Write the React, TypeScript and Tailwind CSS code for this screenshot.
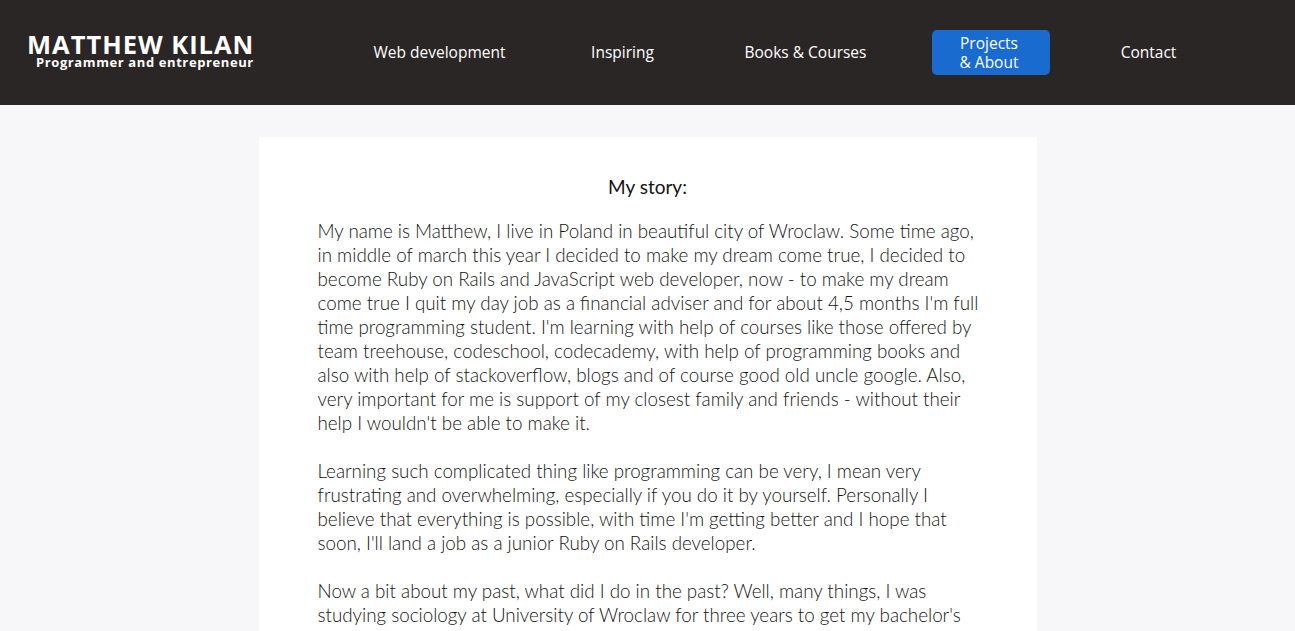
const navItems = [
  { label: "Web development", width: "w-[183px]" },
  { label: "Inspiring", width: "w-[183px]" },
  { label: "Books & Courses", width: "w-[183px]" },
];

const paragraphs = [
  "My name is Matthew, I live in Poland in beautiful city of Wroclaw. Some time ago, in middle of march this year I decided to make my dream come true, I decided to become Ruby on Rails and JavaScript web developer, now - to make my dream come true I quit my day job as a financial adviser and for about 4,5 months I'm full time programming student. I'm learning with help of courses like those offered by team treehouse, codeschool, codecademy, with help of programming books and also with help of stackoverflow, blogs and of course good old uncle google. Also, very important for me is support of my closest family and friends - without their help I wouldn't be able to make it.",
  "Learning such complicated thing like programming can be very, I mean very frustrating and overwhelming, especially if you do it by yourself. Personally I believe that everything is possible, with time I'm getting better and I hope that soon, I'll land a job as a junior Ruby on Rails developer.",
  "Now a bit about my past, what did I do in the past? Well, many things, I was studying sociology at University of Wroclaw for three years to get my bachelor's degree, then I worked in a few different companies, mostly in sales and finance, and I was always curious how things on the web are built.",
];

function Header() {
  return (
    <header className="h-[105px] bg-[#2b2626] flex items-center text-white font-['Open_Sans',sans-serif]">
      <div className="pl-[27px] w-[348px] flex flex-col items-start">
        <h1 className="text-[25.5px] font-bold leading-[22px] tracking-[1px] mt-[-3px]">
          MATTHEW KILAN
        </h1>
        <p className="text-[13px] font-bold leading-[14px] tracking-[0.6px] pl-[9px]">
          Programmer and entrepreneur
        </p>
      </div>
      <nav className="flex items-center text-[15.5px]">
        {navItems.map((item) => (
          <a key={item.label} className={`${item.width} text-center`}>
            {item.label}
          </a>
        ))}
        <div className="w-[183px] flex justify-center pl-[4px]">
          <a className="w-[118px] h-[45px] rounded-[5px] bg-[#1a6bd0] flex flex-col items-center justify-center leading-[19px] pr-[3px]">
            <span>Projects</span>
            <span>&amp; About</span>
          </a>
        </div>
        <a className="w-[137px] text-center">Contact</a>
      </nav>
    </header>
  );
}

export default function App() {
  return (
    <div className="min-h-screen bg-[#f7f6f9]">
      <Header />
      <main className="pt-8 flex justify-center">
        <section className="w-[778px] bg-white pl-[59px] pr-[52px] pt-[38px] pb-16 font-['Lato',sans-serif] text-[#141414]">
          <h2 className="text-center text-[19px] leading-6 mb-[20px] pr-[7px]">My story:</h2>
          <div className="flex flex-col gap-6 font-light text-[18.8px] leading-6">
            {paragraphs.map((p, i) => (
              <p key={i}>{p}</p>
            ))}
          </div>
        </section>
      </main>
    </div>
  );
}
